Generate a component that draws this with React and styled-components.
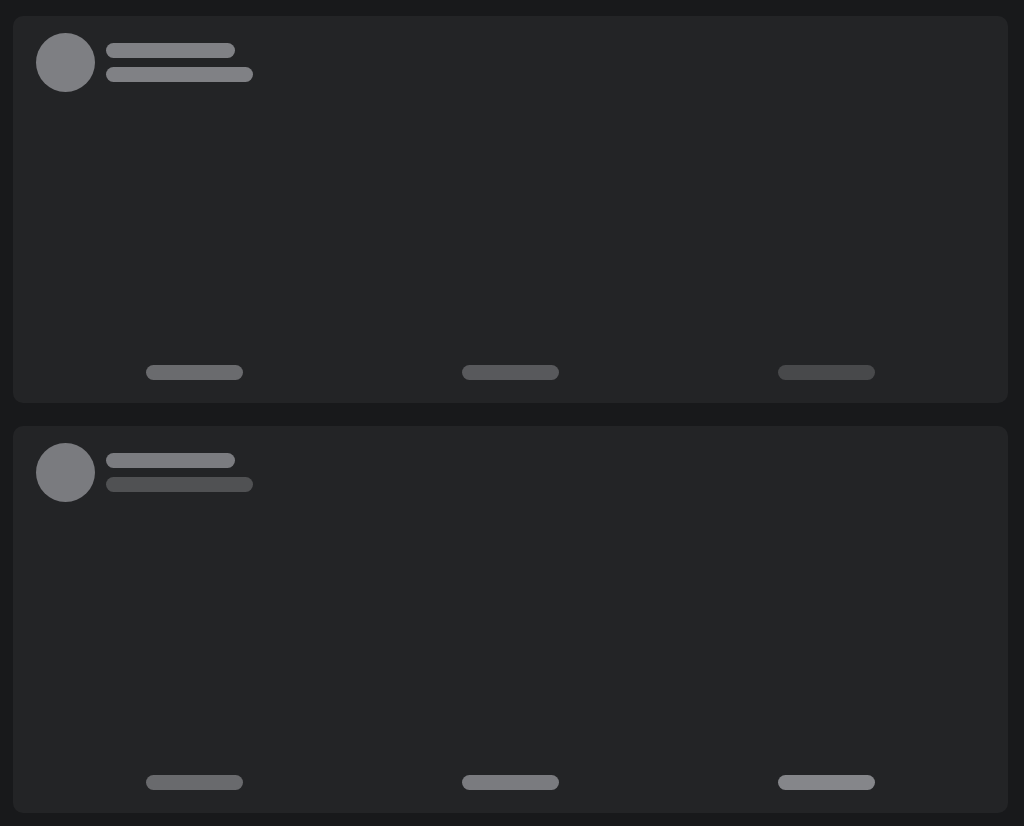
import styled, { createGlobalStyle } from 'styled-components'

const GlobalStyle = createGlobalStyle`
    html, body {
        margin: 0;
        padding: 0;
        background: #18191b;
        font-family: "Inter", "Liberation Sans", sans-serif;
    }
`

const Page = styled.main`
    display: flex;
    flex-direction: column;
    gap: 23px;
    padding: 16px 16px 13px 13px;
    min-height: 100vh;
    box-sizing: border-box;
`

const Card = styled.section`
    display: flex;
    flex-direction: column;
    justify-content: space-between;
    height: 387px;
    box-sizing: border-box;
    padding: 17px 23px 23px;
    background: #232426;
    border-radius: 10px;
`

const Header = styled.div`
    display: flex;
    align-items: center;
    gap: 11px;
`

const Avatar = styled.div`
    width: 59px;
    height: 59px;
    border-radius: 50%;
    background: ${({ tone }) => tone};
`

const Lines = styled.div`
    display: flex;
    flex-direction: column;
    gap: 9px;
`

const Line = styled.div`
    width: ${({ w }) => w}px;
    height: 15px;
    border-radius: 8px;
    background: ${({ tone }) => tone};
`

const Footer = styled.div`
    display: grid;
    grid-template-columns: repeat(3, 1fr);
    justify-items: center;
`

const Bar = styled.div`
    width: 97px;
    height: 15px;
    border-radius: 8px;
    background: ${({ tone }) => tone};
`

const cards = [
    {
        avatar: '#7e7f83',
        lines: ['#808185', '#808185'],
        bars: ['#6a6b6e', '#58595c', '#48494b'],
    },
    {
        avatar: '#7a7b7f',
        lines: ['#7b7c80', '#505153'],
        bars: ['#696a6d', '#7a7b7f', '#85868a'],
    },
]

function SkeletonCard({ avatar, lines, bars }) {
    return (
        <Card>
            <Header>
                <Avatar tone={avatar} />
                <Lines>
                    <Line w={129} tone={lines[0]} />
                    <Line w={147} tone={lines[1]} />
                </Lines>
            </Header>
            <Footer>
                {bars.map((tone, i) => (
                    <Bar key={i} tone={tone} />
                ))}
            </Footer>
        </Card>
    )
}

export default function App() {
    return (
        <>
            <GlobalStyle />
            <Page>
                {cards.map((card, i) => (
                    <SkeletonCard key={i} {...card} />
                ))}
            </Page>
        </>
    )
}
